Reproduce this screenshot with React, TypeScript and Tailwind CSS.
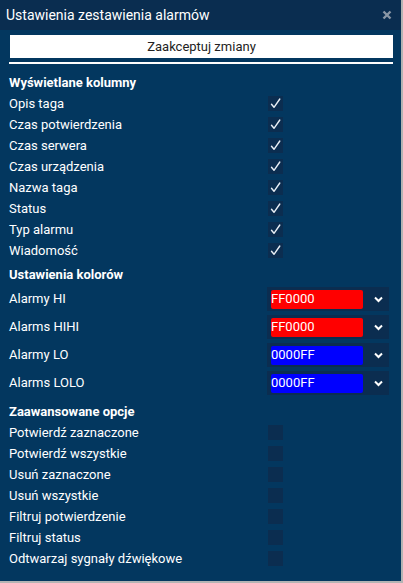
import React from "react";

const columns = [
  "Opis taga",
  "Czas potwierdzenia",
  "Czas serwera",
  "Czas urządzenia",
  "Nazwa taga",
  "Status",
  "Typ alarmu",
  "Wiadomość",
];

const colors = [
  { label: "Alarmy HI", value: "FF0000", bg: "bg-[#ff0000]" },
  { label: "Alarms HIHI", value: "FF0000", bg: "bg-[#ff0000]" },
  { label: "Alarmy LO", value: "0000FF", bg: "bg-[#0000ff]" },
  { label: "Alarms LOLO", value: "0000FF", bg: "bg-[#0000ff]" },
];

const advanced = [
  "Potwierdź zaznaczone",
  "Potwierdź wszystkie",
  "Usuń zaznaczone",
  "Usuń wszystkie",
  "Filtruj potwierdzenie",
  "Filtruj status",
  "Odtwarzaj sygnały dźwiękowe",
];

function Check({ checked }: { checked: boolean }) {
  return (
    <div className="w-[15px] h-[15px] bg-[#0b2d50] flex items-center justify-center">
      {checked && (
        <svg width="11" height="11" viewBox="0 0 11 11">
          <path d="M1.5 6.2 L4 9.3 L9.8 1" stroke="#e8eef5" strokeWidth="1.4" fill="none" strokeLinecap="round" strokeLinejoin="round" />
        </svg>
      )}
    </div>
  );
}

function Row({ label, checked }: { label: string; checked: boolean }) {
  return (
    <div className="h-[21px] flex items-center">
      <div className="w-[259px] text-[13px] text-white">{label}</div>
      <Check checked={checked} />
    </div>
  );
}

function Heading({ children }: { children: React.ReactNode }) {
  return <div className="h-[21px] flex items-center text-[13px] font-bold text-white">{children}</div>;
}

export default function App() {
  return (
    <div className="w-[403px] h-[583px] bg-[#03375f] font-['Roboto',sans-serif] border-r-2 border-b-2 border-[#b4b4b4] flex flex-col">
      <div className="h-[30px] bg-[#0a2d50] flex items-center justify-between pl-[6px] pr-[8px] shrink-0">
        <span className="text-white text-[14px]">Ustawienia zestawienia alarmów</span>
        <svg width="10" height="10" viewBox="0 0 10 10" className="mr-[1px]">
          <path d="M1.5 1.5 L8.5 8.5 M8.5 1.5 L1.5 8.5" stroke="#8a96a5" strokeWidth="2.4" />
        </svg>
      </div>
      <div className="pl-[9px] pr-[8px]">
        <div className="mt-[5px] ml-[1px] h-[23px] bg-white flex items-center justify-center text-[13px] text-[#222]">
          Zaakceptuj zmiany
        </div>
        <div className="mt-[4px] h-[2px] bg-white"></div>
        <div className="mt-[8px]">
          <Heading>Wyświetlane kolumny</Heading>
          {columns.map((c) => (
            <Row key={c} label={c} checked={true} />
          ))}
        </div>
        <div className="mt-[3px]">
          <Heading>Ustawienia kolorów</Heading>
          {colors.map((c) => (
            <div key={c.label} className="h-[28px] flex items-center">
              <div className="w-[258px] text-[13px] text-white">{c.label}</div>
              <div className="w-[122px] h-[24px] bg-[#0b2d50] flex items-center pl-[4px]">
                <div className={`w-[92px] h-[19px] rounded-[2px] ${c.bg} flex items-center text-[13px] text-white`}>
                  {c.value}
                </div>
                <svg width="9" height="7" viewBox="0 0 9 7" className="ml-[11px]">
                  <path d="M1 1.5 L4.5 5 L8 1.5" stroke="white" strokeWidth="2" fill="none" />
                </svg>
              </div>
            </div>
          ))}
        </div>
        <div className="mt-[4px]">
          <Heading>Zaawansowane opcje</Heading>
          {advanced.map((c) => (
            <Row key={c} label={c} checked={false} />
          ))}
        </div>
      </div>
    </div>
  );
}
